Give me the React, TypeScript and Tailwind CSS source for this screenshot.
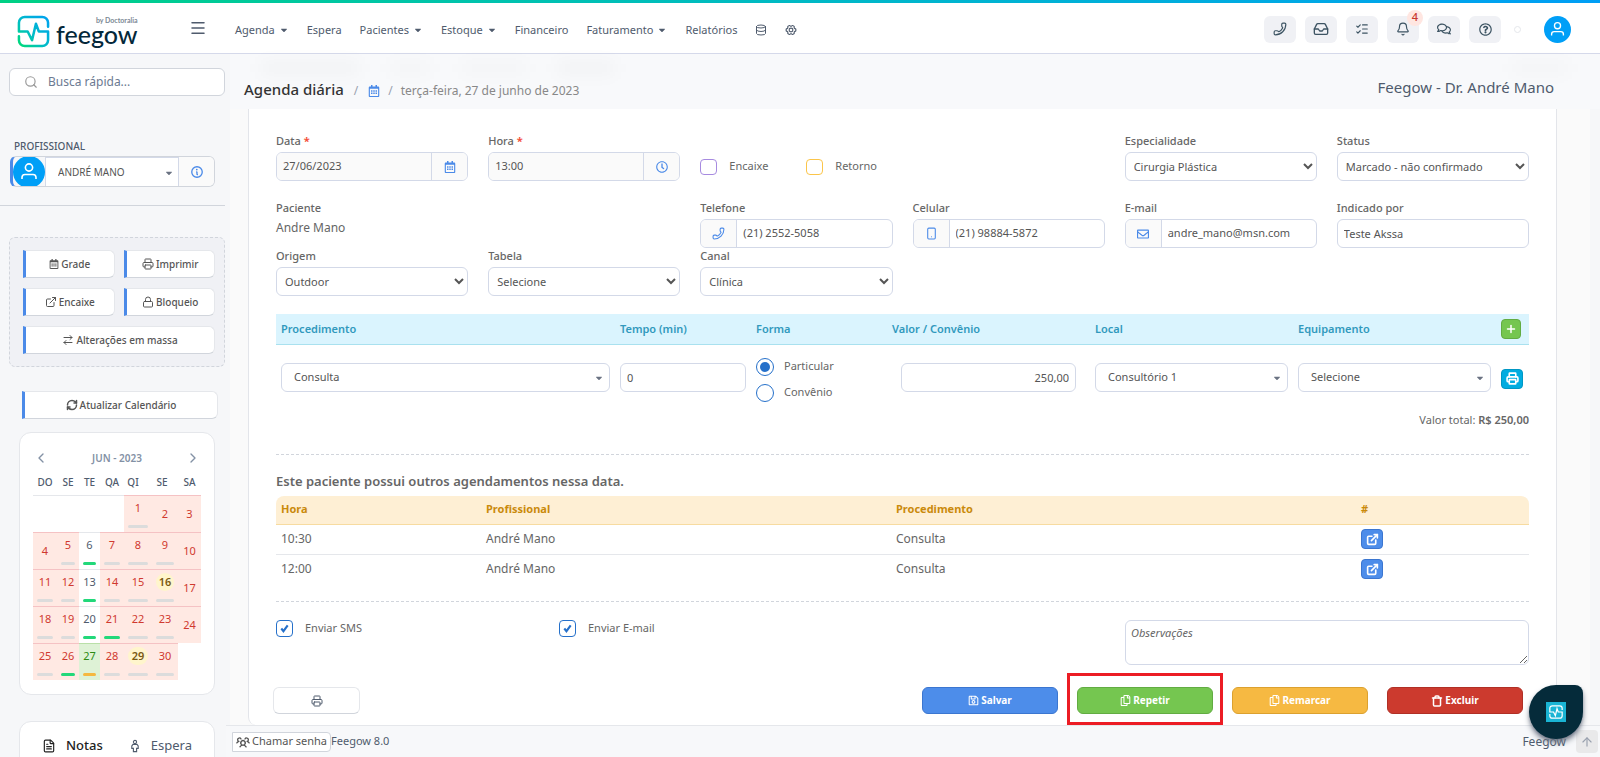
import React from 'react'
import {
  ArrowRightLeft,
  ArrowUp,
  Bell,
  ChevronLeft,
  ChevronRight,
  Database,
  ExternalLink,
  FileText,
  Inbox,
  ListChecks,
  Lock,
  Menu,
  Phone,
  Plus,
  Printer,
  RefreshCw,
  Search,
  Smartphone,
  Trash,
} from 'lucide-react'
import { FaCaretDown, FaRegCalendarAlt, FaRegClock, FaRegComments, FaRegCopy, FaRegEnvelope, FaRegQuestionCircle, FaRegSave } from 'react-icons/fa'
import { PiGearSixBold, PiInfoBold, PiUsersThreeBold } from 'react-icons/pi'

const menu = [
  { label: 'Agenda', caret: true },
  { label: 'Espera' },
  { label: 'Pacientes', caret: true },
  { label: 'Estoque', caret: true },
  { label: 'Financeiro' },
  { label: 'Faturamento', caret: true },
  { label: 'Relatórios' },
]

// r = closed day, w = open day, t = today, h = holiday; bar is the occupancy colour
type Day = { n?: number; kind?: 'r' | 'w' | 't' | 'h'; bar?: 'gray' | 'green' | 'amber' }

const weeks: Day[][] = [
  [{}, {}, {}, {}, { n: 1, kind: 'r', bar: 'gray' }, { n: 2, kind: 'r' }, { n: 3, kind: 'r' }],
  [
    { n: 4, kind: 'r' },
    { n: 5, kind: 'r', bar: 'gray' },
    { n: 6, kind: 'w', bar: 'green' },
    { n: 7, kind: 'r', bar: 'gray' },
    { n: 8, kind: 'r', bar: 'gray' },
    { n: 9, kind: 'r', bar: 'gray' },
    { n: 10, kind: 'r' },
  ],
  [
    { n: 11, kind: 'r', bar: 'gray' },
    { n: 12, kind: 'r', bar: 'gray' },
    { n: 13, kind: 'w', bar: 'green' },
    { n: 14, kind: 'r', bar: 'gray' },
    { n: 15, kind: 'r', bar: 'gray' },
    { n: 16, kind: 'h', bar: 'gray' },
    { n: 17, kind: 'r' },
  ],
  [
    { n: 18, kind: 'r', bar: 'gray' },
    { n: 19, kind: 'r', bar: 'gray' },
    { n: 20, kind: 'w', bar: 'green' },
    { n: 21, kind: 'r', bar: 'green' },
    { n: 22, kind: 'r', bar: 'gray' },
    { n: 23, kind: 'r', bar: 'gray' },
    { n: 24, kind: 'r' },
  ],
  [
    { n: 25, kind: 'r', bar: 'gray' },
    { n: 26, kind: 'r', bar: 'green' },
    { n: 27, kind: 't', bar: 'amber' },
    { n: 28, kind: 'r', bar: 'gray' },
    { n: 29, kind: 'h', bar: 'gray' },
    { n: 30, kind: 'r', bar: 'gray' },
    {},
  ],
]

const dayStyle = {
  r: 'bg-[#ffe9e3] border-[#f5c2c4] text-[#d0392f]',
  w: 'bg-white border-gray-200 text-[#4f5b6d]',
  t: 'bg-[#def2d6] border-[#b9e0a8] text-[#2c8a12]',
  h: 'bg-[#ffe9e3] border-[#f5c2c4] text-[#7a5a12]',
}

const barStyle = { gray: 'bg-[#dcdcdc]', green: 'bg-[#22d87a]', amber: 'bg-[#f5b840]' }

const field = 'h-[29px] w-full rounded-md border border-[#d3d9e8] bg-white text-[11px] text-[#555]'
const addon = 'flex w-9 shrink-0 items-center justify-center border-[#d3d9e8] bg-[#fafafa] text-[#4b8ae8]'

const pulse = 'M32 12V8a6 6 0 0 0-6-6H8a6 6 0 0 0-6 6v9h9l4.500 9L19.500 9l3 8H32v9a6 6 0 0 1-6 6H8a6 6 0 0 1-6-6v-4'

function LogoMark({ className }: { className?: string }) {
  return (
    <svg viewBox="0 0 34 34" className={className} fill="none" strokeWidth="2.6" strokeLinecap="round" strokeLinejoin="round">
      <defs>
        <linearGradient id="mark" x1="0" y1="34" x2="34" y2="0" gradientUnits="userSpaceOnUse">
          <stop offset="0" stopColor="#00e06a" />
          <stop offset="0.45" stopColor="#00bcc8" />
          <stop offset="1" stopColor="#009ef5" />
        </linearGradient>
      </defs>
      <path stroke="url(#mark)" d={pulse} />
    </svg>
  )
}

function Avatar({ className }: { className?: string }) {
  return (
    <svg viewBox="0 0 32 32" className={className} role="img" aria-label="Perfil">
      <circle cx="16" cy="16" r="16" fill="#009ff7" />
      <g fill="none" stroke="#fff" strokeWidth="1.600">
        <circle cx="16" cy="11.500" r="3.600" />
        <path d="M9 23v-1.500a3 3 0 0 1 3-3h8a3 3 0 0 1 3 3V23" />
      </g>
    </svg>
  )
}

function Label({ htmlFor, children, required }: { htmlFor: string; children: React.ReactNode; required?: boolean }) {
  return (
    <label htmlFor={htmlFor} className="block h-[19px] text-[11px] leading-4 font-medium text-[#666]">
      {children} {required && <span className="font-bold text-[#f4503c]">*</span>}
    </label>
  )
}

function NativeSelect({ id, label, value }: { id: string; label: string; value: string }) {
  return (
    <div>
      <Label htmlFor={id}>{label}</Label>
      <select id={id} className={`${field} px-1`}>
        <option>{value}</option>
      </select>
    </div>
  )
}

function IconField({ id, label, value, icon }: { id: string; label: string; value: string; icon: React.ReactNode }) {
  return (
    <div>
      <Label htmlFor={id}>{label}</Label>
      <div className={`${field} flex overflow-hidden`}>
        <span className={`${addon} border-r`}>{icon}</span>
        <input id={id} defaultValue={value} className="min-w-0 flex-1 px-1.5" />
      </div>
    </div>
  )
}

function LockedField({ id, label, value, icon }: { id: string; label: string; value: string; icon: React.ReactNode }) {
  return (
    <div>
      <Label htmlFor={id} required>
        {label}
      </Label>
      <div className={`${field} flex overflow-hidden`}>
        <input id={id} defaultValue={value} readOnly className="min-w-0 flex-1 bg-[#fafafa] px-1.5" />
        <button aria-label={`Escolher ${label}`} className={`${addon} border-l`}>
          {icon}
        </button>
      </div>
    </div>
  )
}

function ComboSelect({ label, value }: { label: string; value: string }) {
  return (
    <div className="relative">
      <select aria-label={label} className={`${field} block appearance-none px-3 text-[#333]`}>
        <option>{value}</option>
      </select>
      <FaCaretDown className="pointer-events-none absolute top-2.5 right-1.5 size-2.5 text-gray-500" />
    </div>
  )
}

function SideButton({ icon, children, className = '' }: { icon: React.ReactNode; children: React.ReactNode; className?: string }) {
  return (
    <button
      className={`flex h-7 items-center justify-center gap-0.5 rounded-r-md border border-b-gray-300 border-l-[3px] border-gray-200 border-l-[#4b8ae8] bg-white text-[10px] font-medium text-[#555] ${className}`}
    >
      {icon}
      {children}
    </button>
  )
}

function Header() {
  const round = 'flex h-[27px] w-8 items-center justify-center rounded-md bg-[#f0f1f5] text-[#3d5463]'
  return (
    <header className="shrink-0 border-b border-[#d5d9ea] bg-white">
      <div className="h-[3px] bg-linear-to-r from-[#00d084] via-[#00b4d0] via-60% to-[#009ef5]" />
      <div className="flex h-[50px] items-center pr-[29px] pl-[17px] text-[11px] text-[#4f5b6d]">
        <a href="#inicio" aria-label="Feegow" className="flex w-[172px] items-center gap-1.5 pt-1.5">
          <LogoMark className="size-[33px]" />
          <span className="flex flex-col items-end font-['Lato',sans-serif] text-[#04283a]">
            <span className="text-[7px] leading-[6px] font-bold text-[#7b8794]">by Doctoralia</span>
            <span className="text-[25px] leading-[22px] font-medium">feegow</span>
          </span>
        </a>
        <button aria-label="Menu" className="mr-7">
          <Menu className="size-[18px]" />
        </button>
        <nav className="flex items-center gap-[18px] pt-1">
          {menu.map((m) => (
            <a key={m.label} href="#menu" className="flex items-center gap-1">
              {m.label}
              {m.caret && <FaCaretDown className="size-2.5" />}
            </a>
          ))}
          <a href="#dados" aria-label="Dados">
            <Database className="size-3" />
          </a>
          <a href="#config" aria-label="Configurações">
            <PiGearSixBold className="size-3" />
          </a>
        </nav>
        <div className="ml-auto flex items-center gap-[9px] pt-0.5">
          <button aria-label="Telefone" className={round}>
            <Phone className="size-[14px] -scale-x-100" />
          </button>
          <button aria-label="Caixa de entrada" className={round}>
            <Inbox className="size-4" />
          </button>
          <button aria-label="Tarefas" className={round}>
            <ListChecks className="size-[14px]" />
          </button>
          <button aria-label="Notificações" className={`${round} relative`}>
            <Bell className="size-[14px]" />
            <span className="absolute -top-1.5 -right-1 flex size-4 items-center justify-center rounded-full bg-[#ffe6e1] text-[11px] font-medium text-[#c8372d]">
              4
            </span>
          </button>
          <button aria-label="Conversas" className={round}>
            <FaRegComments className="size-[14px]" />
          </button>
          <button aria-label="Ajuda" className={round}>
            <FaRegQuestionCircle className="size-[13px]" />
          </button>
          <span className="mr-3.5 ml-1 size-[7px] rounded-full border border-gray-200" />
          <button aria-label="Minha conta">
            <Avatar className="size-[27px]" />
          </button>
        </div>
      </div>
    </header>
  )
}

function Calendar() {
  return (
    <div className="mt-[13px] mr-[15px] ml-[19px] rounded-xl border border-gray-200 bg-white px-[13px] pt-4 pb-3.5 text-[#4f5b6d]">
      <div className="flex h-[18px] items-center justify-between text-[10px] font-semibold text-[#8391a5]">
        <button aria-label="Mês anterior">
          <ChevronLeft className="size-4" />
        </button>
        JUN - 2023
        <button aria-label="Próximo mês">
          <ChevronRight className="size-4" />
        </button>
      </div>
      <table className="mt-1 w-full table-fixed text-center text-[11px]">
        <thead>
          <tr className="h-6 text-[10px]">
            <th className="w-[24px] font-medium">DO</th>
            <th className="w-[22px] font-medium">SE</th>
            <th className="w-[21px] font-medium">TE</th>
            <th className="w-[24px] font-medium">QA</th>
            <th className="w-[28px] pr-2.5 font-medium">QI</th>
            <th className="w-[26px] pr-1.5 font-medium">SE</th>
            <th className="w-[23px] font-medium">SA</th>
          </tr>
        </thead>
        <tbody>
          {weeks.map((week, i) => (
            <tr key={i} className="h-[37px]">
              {week.map((d, j) => (
                <td key={j} className={`border-t px-1 ${d.kind ? dayStyle[d.kind] : i === 0 ? 'border-gray-200' : 'border-transparent'}`}>
                  <span className={`block leading-[18px] ${d.kind === 'h' ? 'rounded-full bg-[#fff5cc] font-semibold' : ''}`}>{d.n}</span>
                  {d.bar && <span className={`mt-2 block h-[3px] rounded-full ${barStyle[d.bar]}`} />}
                </td>
              ))}
            </tr>
          ))}
        </tbody>
      </table>
    </div>
  )
}

function Sidebar() {
  return (
    <aside className="w-[230px] shrink-0 overflow-hidden bg-[#f6f7f9]">
      <div className="mt-[14px] mr-[5px] ml-[9px] flex h-7 items-center rounded-md border border-gray-300 bg-white px-3.5 text-[#999]">
        <Search className="size-[14px] shrink-0" />
        <input aria-label="Busca rápida" placeholder="Busca rápida..." className="ml-2.5 min-w-0 flex-1 text-xs placeholder:text-[#6c7a92]" />
      </div>

      <label htmlFor="profissional" className="mt-[41px] ml-3.5 block text-[10px] leading-[18px] font-medium text-[#4f5b6d]">
        PROFISSIONAL
      </label>
      <div className="mt-px mr-[15px] ml-2.5 flex h-[31px] overflow-hidden rounded-md border border-l-[3px] border-gray-300 border-l-[#4b8ae8]">
        <Avatar className="-my-px size-8 shrink-0" />
        <div className="relative flex-1 border-x border-t border-[#d3d9e8] bg-white">
          <select id="profissional" className="h-full w-full appearance-none px-3 text-[10px] text-[#555]">
            <option>ANDRÉ MANO</option>
          </select>
          <FaCaretDown className="pointer-events-none absolute top-2.5 right-1 size-2.5 text-gray-500" />
        </div>
        <button aria-label="Informações" className="flex w-[35px] items-center justify-center bg-[#fafafa] text-[#4b8ae8]">
          <PiInfoBold className="size-[14px]" />
        </button>
      </div>
      <hr className="mt-[18px] mr-[5px] border-gray-300" />

      <div className="mt-[31px] mr-[5px] ml-[9px] grid grid-cols-2 gap-x-[9px] gap-y-2.5 rounded-md border border-dashed border-gray-300 bg-[#f0f1f5] pt-3 pr-[9px] pb-3 pl-[13px]">
        <SideButton icon={<FaRegCalendarAlt />}>Grade</SideButton>
        <SideButton icon={<Printer className="size-3" />}>Imprimir</SideButton>
        <SideButton icon={<ExternalLink className="size-3" />}>Encaixe</SideButton>
        <SideButton icon={<Lock className="size-3" />}>Bloqueio</SideButton>
        <SideButton className="col-span-2" icon={<ArrowRightLeft className="size-3" />}>
          Alterações em massa
        </SideButton>
      </div>
      <div className="mt-6 mr-3 ml-[22px] grid">
        <SideButton icon={<RefreshCw className="size-3" strokeWidth={3} />}>Atualizar Calendário</SideButton>
      </div>

      <Calendar />

      <div className="mt-[26px] mr-[15px] ml-[19px] flex h-16 justify-between rounded-xl border border-gray-200 bg-white px-[22px] pt-4 text-[13px]">
        <button className="flex h-4 items-center gap-2.5 font-medium text-[#222]">
          <FileText className="size-[14px]" />
          Notas
        </button>
        <button className="flex h-4 items-center gap-3 text-[#4f5b6d]">
          <svg viewBox="0 0 10 16" className="h-[14px] w-2" fill="none" stroke="currentColor" strokeWidth="1.400">
            <circle cx="5" cy="3" r="2" />
            <path d="M2.500 6h5l1.500 2v3H7v4H3v-4H1V8z" />
          </svg>
          Espera
        </button>
      </div>
    </aside>
  )
}

function Procedures() {
  return (
    <table className="mt-[18px] w-full table-fixed text-left text-xs">
      <thead>
        <tr className="h-[30px] border-b border-[#a9e1ef] bg-[#daf4fe] text-[11px] text-[#3199bd] *:px-[5px] *:font-semibold">
          <th className="pt-0.5">Procedimento</th>
          <th className="w-[136px] pt-0.5">Tempo (min)</th>
          <th className="w-[136px] pt-0.5">Forma</th>
          <th className="w-[203px] pt-0.5">Valor / Convênio</th>
          <th className="w-[203px] pt-0.5">Local</th>
          <th className="w-[203px] pt-0.5">Equipamento</th>
          <th className="w-[33px]">
            <button aria-label="Adicionar" className="flex h-5 w-5 items-center justify-center rounded-sm border border-[#62ac42] bg-[#75c650] text-white">
              <Plus className="size-3" strokeWidth={3} />
            </button>
          </th>
        </tr>
      </thead>
      <tbody>
        <tr className="h-[62px] *:px-[5px] *:pt-[18px] *:align-top">
          <td>
            <ComboSelect label="Procedimento" value="Consulta" />
          </td>
          <td>
            <input aria-label="Tempo" defaultValue="0" className={`${field} block px-1.5`} />
          </td>
          <td>
            <div className="-mt-[5px] flex flex-col gap-2 text-[11px] text-[#666]">
              {['Particular', 'Convênio'].map((f, i) => (
                <label key={f} className="flex h-[18px] items-center gap-2.5">
                  <input
                    type="radio"
                    name="forma"
                    defaultChecked={i === 0}
                    className="size-[18px] appearance-none rounded-full border border-[#2570ca] bg-clip-content p-[3px] checked:bg-[#2570ca]"
                  />
                  {f}
                </label>
              ))}
            </div>
          </td>
          <td>
            <div className="pr-[9px] pl-[9px]">
              <input aria-label="Valor" defaultValue="250,00" className={`${field} block px-1.5 text-right`} />
            </div>
          </td>
          <td>
            <ComboSelect label="Local" value="Consultório 1" />
          </td>
          <td>
            <ComboSelect label="Equipamento" value="Selecione" />
          </td>
          <td>
            <button aria-label="Imprimir" className="mt-1.5 flex h-5 w-[22px] items-center justify-center rounded-sm border border-[#0097c4] bg-[#00ace0] text-white">
              <Printer className="size-[13px]" strokeWidth={3} />
            </button>
          </td>
        </tr>
      </tbody>
    </table>
  )
}

function OtherBookings() {
  return (
    <table className="w-full table-fixed text-left text-xs text-[#666]">
      <thead>
        <tr className="h-7 text-[11px] text-[#ca8a0c] *:border-b *:border-[#f7dba0] *:bg-[#feefd4] *:px-[5px] *:font-bold">
          <th className="w-[205px] rounded-tl-lg">Hora</th>
          <th>Profissional</th>
          <th className="w-[465px]">Procedimento</th>
          <th className="w-[173px] rounded-tr-lg">#</th>
        </tr>
      </thead>
      <tbody>
        {['10:30', '12:00'].map((hour) => (
          <tr key={hour} className="h-[30px] border-b border-gray-200 *:px-[5px] last:border-0">
            <td>{hour}</td>
            <td>André Mano</td>
            <td>Consulta</td>
            <td>
              <a href="#agendamento" aria-label="Abrir" className="flex h-5 w-[22px] items-center justify-center rounded-sm border border-[#3b76d0] bg-[#4d8dea] text-white">
                <ExternalLink className="size-[13px]" strokeWidth={3} />
              </a>
            </td>
          </tr>
        ))}
      </tbody>
    </table>
  )
}

function CheckOption({ label }: { label: string }) {
  return (
    <label className="flex h-[17px] items-center gap-3 text-[11px] text-[#666]">
      <span className="relative flex size-[17px]">
        <input type="checkbox" defaultChecked className="size-[17px] appearance-none rounded-sm border border-[#2570ca]" />
        <svg viewBox="0 0 16 16" className="pointer-events-none absolute inset-0 size-[17px]" fill="none" stroke="#2570ca" strokeWidth="2">
          <path d="M5 8l2 2.500 4-5.500" />
        </svg>
      </span>
      {label}
    </label>
  )
}

function Actions() {
  const action = 'flex h-[27px] w-[136px] items-center justify-center gap-0.5 rounded-md border text-[10px] font-bold text-white'
  return (
    <div className="mt-[22px] -mr-0.5 -ml-[3px] flex items-center pr-2">
      <button aria-label="Imprimir" className="flex h-[27px] w-[87px] items-center justify-center rounded-md border border-gray-200 border-b-gray-300 text-[#4f5b6d]">
        <Printer className="size-3" />
      </button>
      <div className="ml-auto flex gap-[19px]">
        <button className={`${action} border-[#3b76d0] bg-[#4d8dea]`}>
          <FaRegSave className="size-[11px]" />
          Salvar
        </button>
        <div className="relative">
          <button className={`${action} border-[#62ac42] bg-[#75c650]`}>
            <FaRegCopy className="size-[11px]" />
            Repetir
          </button>
          <span className="pointer-events-none absolute -inset-x-[10px] -top-[14px] -bottom-[11px] border-[3px] border-[#ec1c24]" />
        </div>
        <button className={`${action} border-[#dca12f] bg-[#f6b942]`}>
          <FaRegCopy className="size-[11px]" />
          Remarcar
        </button>
        <button className={`${action} border-[#b03026] bg-[#cc3a2e]`}>
          <Trash className="size-3" strokeWidth={3} />
          Excluir
        </button>
      </div>
    </div>
  )
}

function BookingForm() {
  return (
    <form className="flex-1 rounded-b-lg border-x border-[#e3e5ea] bg-white px-[27px] pt-6" onSubmit={(e) => e.preventDefault()}>
      <div className="grid grid-cols-6 gap-x-5">
        <LockedField id="data" label="Data" value="27/06/2023" icon={<FaRegCalendarAlt className="size-3" />} />
        <LockedField id="hora" label="Hora" value="13:00" icon={<FaRegClock className="size-3" />} />
        <div className="col-span-2 flex items-center pt-[19px] text-[11px] text-[#666]">
          <label className="flex w-[106px] items-center gap-3">
            <input type="checkbox" className="h-4 w-[17px] appearance-none rounded-sm border border-[#a78be0]" />
            Encaixe
          </label>
          <label className="flex w-[106px] items-center gap-3">
            <input type="checkbox" className="h-4 w-[17px] appearance-none rounded-sm border border-[#fbc54a]" />
            Retorno
          </label>
        </div>
        <NativeSelect id="especialidade" label="Especialidade" value="Cirurgia Plástica" />
        <NativeSelect id="status" label="Status" value="Marcado - não confirmado" />
      </div>

      <div className="mt-[19px] grid grid-cols-6 gap-x-5">
        <div className="col-span-2 text-[#666]">
          <p className="h-[19px] text-[11px] leading-4 font-medium">Paciente</p>
          <p className="text-xs leading-[18px]">Andre Mano</p>
        </div>
        <IconField id="telefone" label="Telefone" value="(21) 2552-5058" icon={<Phone className="size-[13px] -scale-x-100" />} />
        <IconField id="celular" label="Celular" value="(21) 98884-5872" icon={<Smartphone className="size-[13px]" />} />
        <IconField id="email" label="E-mail" value="andre_mano@msn.com" icon={<FaRegEnvelope className="size-3" />} />
        <div>
          <Label htmlFor="indicado">Indicado por</Label>
          <input id="indicado" defaultValue="Teste Akssa" className={`${field} px-1.5`} />
        </div>
      </div>

      <div className="grid grid-cols-6 gap-x-5">
        <NativeSelect id="origem" label="Origem" value="Outdoor" />
        <NativeSelect id="tabela" label="Tabela" value="Selecione" />
        <NativeSelect id="canal" label="Canal" value="Clínica" />
      </div>

      <Procedures />
      <p className="mt-1 text-right text-[11px] leading-5 text-[#666]">
        Valor total: <strong className="font-semibold">R$ 250,00</strong>
      </p>
      <hr className="mt-6 border-dashed border-gray-300" />

      <h2 className="mt-4 mb-[5px] text-[13px] leading-5 font-semibold text-[#666]">Este paciente possui outros agendamentos nessa data.</h2>
      <OtherBookings />
      <hr className="mt-[17px] border-dashed border-gray-300" />

      <div className="mt-[18px] flex">
        <div className="w-[283px]">
          <CheckOption label="Enviar SMS" />
        </div>
        <CheckOption label="Enviar E-mail" />
        <textarea
          aria-label="Observações"
          placeholder="Observações"
          className="ml-auto h-[45px] w-[404px] rounded-md border border-[#d3d9e8] px-[5px] py-1 text-[11px] placeholder:text-[#666] placeholder:italic"
        />
      </div>
      <Actions />
    </form>
  )
}

export default function App() {
  return (
    <div className="flex h-screen flex-col overflow-hidden bg-[#f6f7f9] font-['Noto_Sans','Open_Sans',sans-serif]">
      <Header />
      <div className="flex min-h-0 flex-1">
        <Sidebar />
        <div className="flex min-w-0 flex-1 flex-col">
          <div className="relative flex h-[55px] shrink-0 items-end bg-[#f8f9fb] pr-[46px] pb-2.5 pl-3.5 text-xs text-[#888]">
            <div className="pointer-events-none absolute inset-x-8 top-2 flex h-3 gap-8 blur-sm">
              <span className="w-24 bg-black/3" />
              <span className="w-10 bg-black/2" />
              <span className="w-16 bg-black/2" />
              <span className="w-14 bg-black/3" />
              <span className="ml-auto w-14 bg-black/2" />
            </div>
            <h1 className="text-[15px] leading-5 font-medium text-[#333]">Agenda diária</h1>
            <span className="mx-2.5 text-gray-400">/</span>
            <FaRegCalendarAlt className="mb-0.5 size-3 text-[#4b8ae8]" />
            <span className="mx-2 text-gray-400">/</span>
            <span>terça-feira, 27 de junho de 2023</span>
            <span className="mb-0.5 ml-auto text-[15px] leading-5 text-[#4f5b6d]">Feegow - Dr. André Mano</span>
          </div>
          <main className="mr-2.5 flex min-h-0 flex-1 bg-[#fafafa] pr-[33px] pl-[18px]">
            <BookingForm />
          </main>
          <footer className="-ml-1 flex h-8 shrink-0 items-center border-t border-gray-200 bg-[#f7f8fa] pr-0.5 pl-1.5 text-xs text-[#4f5b6d]">
            <button className="flex h-5 items-center gap-0.5 rounded-r-sm border border-gray-300 bg-white px-[3px] text-[11px] text-[#555]">
              <PiUsersThreeBold className="size-[14px]" />
              Chamar senha
            </button>
            <span className="text-[11px]">Feegow 8.0</span>
            <span className="mr-2.5 ml-auto">Feegow</span>
            <a href="#topo" aria-label="Voltar ao topo" className="flex h-[23px] w-[22px] items-center justify-center rounded-sm bg-[#e9e9ea] text-gray-400">
              <ArrowUp className="size-[14px]" />
            </a>
          </footer>
        </div>
      </div>
      <button
        aria-label="Abrir chat"
        className="fixed right-[17px] bottom-[18px] flex size-[54px] items-center justify-center rounded-[27px] rounded-tr-lg bg-[#052b3a] shadow-md shadow-gray-500"
      >
        <span className="flex size-5 items-center justify-center bg-[#1ab4d4]">
          <svg viewBox="0 0 34 34" className="size-[14px]" fill="none" stroke="#fff" strokeWidth="3">
            <path d={pulse} />
          </svg>
        </span>
      </button>
    </div>
  )
}
